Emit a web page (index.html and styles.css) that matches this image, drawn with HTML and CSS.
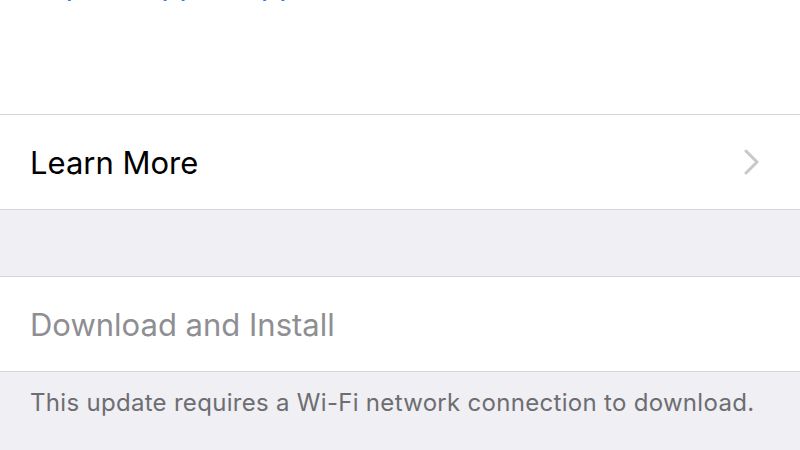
FILE: index.html
```html
<!DOCTYPE html>
<html lang="en">
<head>
    <meta charset="UTF-8">
    <meta name="viewport" content="width=device-width, initial-scale=1.0">
    <title>Software Update</title>
    <link rel="stylesheet" href="styles.css">
</head>
<body>
    <div class="notes">
        <a class="notes-link" href="#">https://support.apple.com/kb/HT201222</a>
    </div>

    <div class="group">
        <div class="cell">
            <span class="cell-label">Learn More</span>
            <svg class="chevron" width="16" height="26" viewBox="0 0 16 26">
                <polyline points="2,2 13,13 2,24" fill="none" stroke="#c7c7cc" stroke-width="3" stroke-linecap="round" stroke-linejoin="round"/>
            </svg>
        </div>
    </div>

    <div class="spacer"></div>

    <div class="group">
        <div class="cell">
            <span class="cell-label disabled">Download and Install</span>
        </div>
    </div>
    <p class="footnote">This update requires a Wi-Fi network connection to download.</p>
</body>
</html>
```

FILE: styles.css
```css
body {
    font-family: Inter, "Liberation Sans", sans-serif;
    margin: 0;
    background-color: #efeff4;
}
.notes {
    height: 114px;
    overflow: hidden;
    background: #fff;
    padding-left: 30px;
}
.notes-link {
    display: block;
    margin-top: -34px;
    font-size: 31px;
    line-height: 36px;
    letter-spacing: -0.8px;
    color: #3478f6;
    text-decoration: none;
    white-space: nowrap;
}
.group {
    background: #fff;
    border-top: 1px solid #d6d5da;
    border-bottom: 1px solid #d6d5da;
}
.cell {
    height: 94px;
    display: flex;
    align-items: center;
    justify-content: space-between;
    padding: 0 40px 0 30px;
}
.cell-label {
    font-size: 31px;
    color: #000;
}
.cell-label.disabled {
    color: #8e8e93;
}
.spacer {
    height: 66px;
}
.footnote {
    margin: 0;
    padding: 16px 30px;
    font-size: 24px;
    letter-spacing: 0.3px;
    color: #6d6d72;
}
```
